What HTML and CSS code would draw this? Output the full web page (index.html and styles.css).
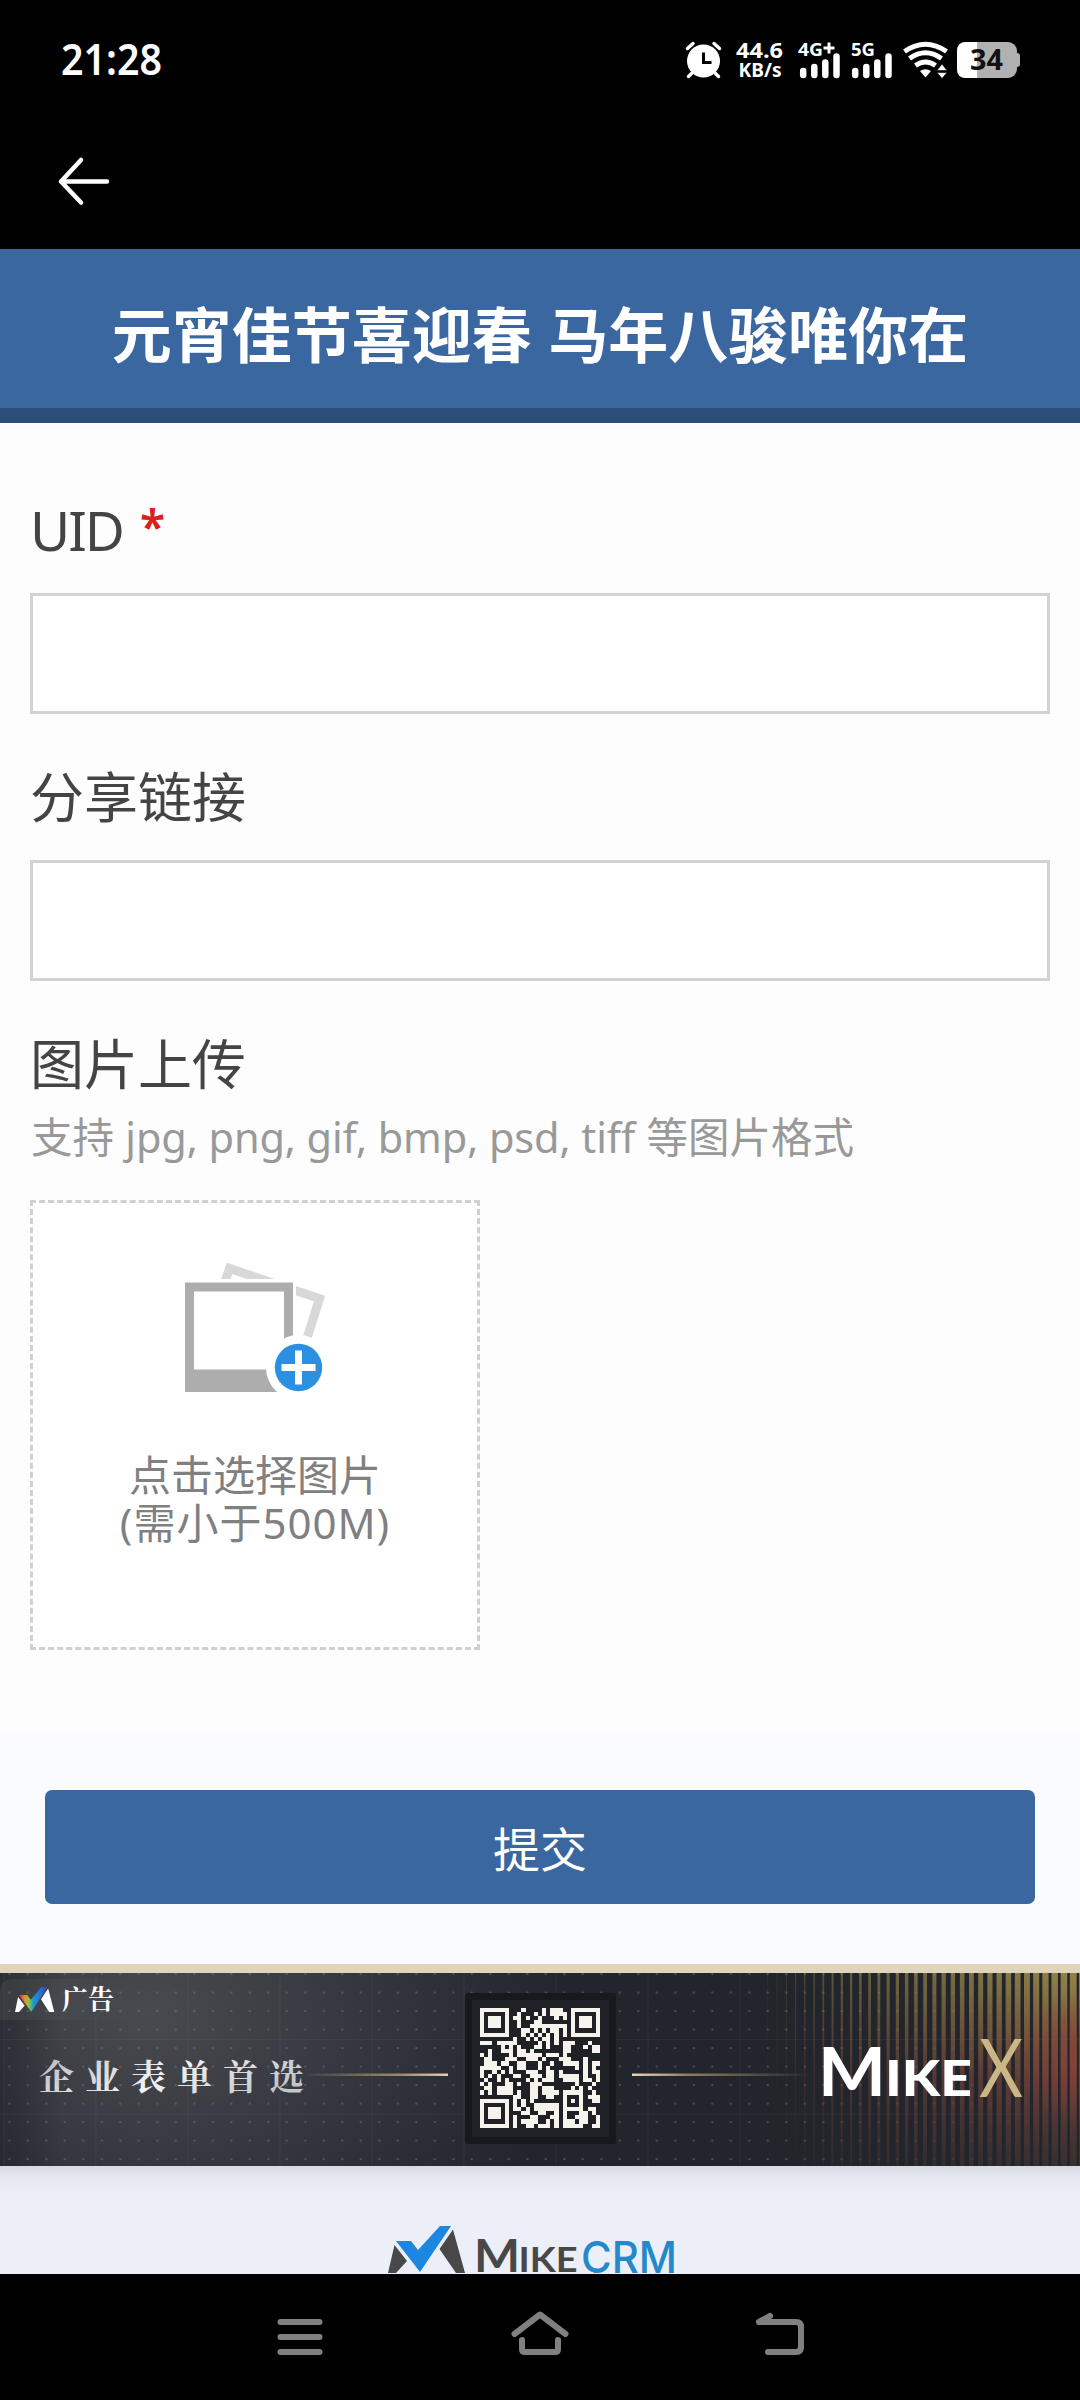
FILE: index.html
```html
<!DOCTYPE html>
<html lang="zh-CN">
<head>
<meta charset="utf-8">
<title>元宵佳节喜迎春 马年八骏唯你在</title>
<link rel="stylesheet" href="styles.css">
</head>
<body>
<div class="statusbar">
  <svg class="clock" width="110" height="50" viewBox="0 0 110 50"><text x="0" y="40" textLength="101" lengthAdjust="spacingAndGlyphs">21:28</text></svg>
  <div class="indicators">
    <svg width="38" height="40" viewBox="0 0 38 40">
      <circle cx="18.500" cy="21" r="16.500" fill="#fff"/>
      <path d="M2.500 8.500l5.500-5M34.500 8.500l-5.500-5M6.500 33.500l-3 3M30.500 33.500l3 3" stroke="#fff" stroke-width="3.500" stroke-linecap="round"/>
      <path d="M18.500 12.500v10h8" fill="none" stroke="#000" stroke-width="3"/>
    </svg>
    <svg class="stat" width="50" height="40" viewBox="0 0 50 40">
      <text x="0" y="17.500" font-size="21" textLength="47" lengthAdjust="spacingAndGlyphs">44.6</text>
      <text x="2.500" y="37" font-size="19" textLength="43" lengthAdjust="spacingAndGlyphs">KB/s</text>
    </svg>
    <svg class="stat" width="44" height="40" viewBox="0 0 44 40">
      <text x="0" y="15.500" font-size="18.500" textLength="25" lengthAdjust="spacingAndGlyphs">4G</text>
      <path d="M31 2.500v11M25.500 8h11" stroke="#fff" stroke-width="3"/>
      <path d="M5.200 31v4M16.300 27v8M27.300 22.500v12.500M38.500 16.500v18.500" stroke="#fff" stroke-width="6.500" stroke-linecap="round"/>
    </svg>
    <svg class="stat" width="44" height="40" viewBox="0 0 44 40">
      <text x="3" y="15.500" font-size="18.500" textLength="24" lengthAdjust="spacingAndGlyphs">5G</text>
      <path d="M8.200 31v4M19.300 27v8M30.300 22.500v12.500M41.500 16.500v18.500" stroke="#fff" stroke-width="6.500" stroke-linecap="round" transform="translate(-1)"/>
    </svg>
    <svg width="46" height="40" viewBox="0 0 46 40">
      <path d="M1.500 11.500q21-14.500 42 0M6.500 18.500q16-11.500 32 0M12.500 25.500q10-7 20 0" fill="none" stroke="#fff" stroke-width="5"/>
      <path d="M17 31q5.500-3.500 11 0l-5.500 6.500z" fill="#fff"/>
      <path d="M39 24l5 6.500h-10zM39 38.500l5-6h-10z" fill="#fff" stroke="#000" stroke-width=".6"/>
    </svg>
    <svg class="battery" width="64" height="40" viewBox="0 0 64 40">
      <rect x="0" y="2" width="60" height="36" rx="9" fill="#b1b1b1"/>
      <path d="M60 13q3 0 3 3v8q0 3-3 3z" fill="#b1b1b1"/>
      <path d="M9 2h11v36H9q-9 0-9-9V11q0-9 9-9z" fill="#fff"/>
      <text x="13" y="30" textLength="33" lengthAdjust="spacingAndGlyphs">34</text>
    </svg>
  </div>
</div>
<div class="appbar">
  <svg width="54" height="52" viewBox="0 0 54 52" fill="none" stroke="#fff" stroke-width="4.500" stroke-linecap="round" stroke-linejoin="round"><path d="M50 25.500H4M24 4L4 25.500l20 21"/></svg>
</div>
<header class="title">元宵佳节喜迎春 马年八骏唯你在</header>
<main class="form">
  <div class="field">
    <label class="label" for="uid"><span class="latin">UID</span><span class="req">*</span></label>
    <input class="input" id="uid">
  </div>
  <div class="field">
    <label class="label" for="link">分享链接</label>
    <input class="input" id="link">
  </div>
  <div class="field">
    <div class="label">图片上传</div>
    <div class="hint">支持 <span class="formats">jpg, png, gif, bmp, psd, tiff</span> 等图片格式</div>
    <div class="upload">
      <svg width="142" height="134" viewBox="0 0 142 134">
        <path d="M39.500 21L44.500 6.500 134.500 36.500 120.500 81" fill="none" stroke="#d8d8d8" stroke-width="9"/>
        <rect x="-3" y="17" width="114" height="116" fill="#fff"/>
        <path fill-rule="evenodd" fill="#adadad" d="M0 20.500h108v109.500H0zM9 29.500v78h90v-78z"/>
        <circle cx="113.500" cy="105.500" r="32.500" fill="#fff"/>
        <circle cx="113.500" cy="105.500" r="23.700" fill="#2b8fe2"/>
        <path d="M96.500 105.500h34M113.500 88.500v34" stroke="#fff" stroke-width="7"/>
      </svg>
      <div class="upload-text">点击选择图片<br><span class="limit">(需小于500M)</span></div>
    </div>
  </div>
</main>
<div class="submit"><button class="btn">提交</button></div>
<section class="ad">
  <svg width="1080" height="193" viewBox="0 0 1080 193">
    <defs>
      <radialGradient id="glow" gradientUnits="userSpaceOnUse" cx="150" cy="40" r="420" gradientTransform="translate(0 10) scale(1 .75)"><stop offset="0" stop-color="#484a4f"/><stop offset=".5" stop-color="#34373e"/><stop offset="1" stop-color="#22252b"/></radialGradient>
      <linearGradient id="edge"><stop offset="0" stop-color="#1c1f25" stop-opacity=".5"/><stop offset="1" stop-color="#1c1f25" stop-opacity="0"/></linearGradient>
      <pattern id="dots" width="18.500" height="18.500" patternUnits="userSpaceOnUse"><circle cx="9.300" cy="1.200" r="1.100" fill="#777b80" opacity=".55"/></pattern>
      <pattern id="grid" width="92" height="74.500" patternUnits="userSpaceOnUse" y="66"><path d="M0 .5h92M4 0v75" stroke="#808a96" stroke-opacity=".1"/></pattern>
      <linearGradient id="olive" x2="0" y2="1"><stop offset="0" stop-color="#938648"/><stop offset=".3" stop-color="#80603e"/><stop offset=".55" stop-color="#694039"/><stop offset="1" stop-color="#39302f"/></linearGradient>
      <radialGradient id="red" gradientUnits="userSpaceOnUse" cx="1080" cy="85" r="65"><stop offset="0" stop-color="#8a4238"/><stop offset="1" stop-color="#8a4238" stop-opacity="0"/></radialGradient>
      <linearGradient id="fade" gradientUnits="userSpaceOnUse" x1="740" x2="1080" y1="40" y2="0"><stop offset="0" stop-color="#000"/><stop offset=".3" stop-color="#888"/><stop offset="1" stop-color="#fff"/></linearGradient>
      <mask id="right"><rect x="740" width="340" height="193" fill="url(#fade)"/></mask>
      <clipPath id="stripes"><path id="stripe-path"/></clipPath>
      <linearGradient id="lineL"><stop offset="0" stop-color="#b09a75" stop-opacity="0"/><stop offset=".7" stop-color="#a18d6b"/><stop offset="1" stop-color="#e3ceb0"/></linearGradient>
      <linearGradient id="lineR"><stop offset="0" stop-color="#e8d4b5"/><stop offset=".3" stop-color="#8f7f62"/><stop offset="1" stop-color="#8f7f62" stop-opacity="0"/></linearGradient>
      <linearGradient id="rainbow"><stop offset="0" stop-color="#d22d35"/><stop offset=".2" stop-color="#f08a2b"/><stop offset=".34" stop-color="#8cc63e"/><stop offset=".5" stop-color="#1b9ad6"/><stop offset=".75" stop-color="#2673ce"/><stop offset="1" stop-color="#5a2ca8"/></linearGradient>
      <linearGradient id="silver" x2="1" y2=".3"><stop offset="0" stop-color="#b5b7bb"/><stop offset=".55" stop-color="#f2f2f4"/><stop offset="1" stop-color="#c4c6cb"/></linearGradient>
      <linearGradient id="badge"><stop offset="0" stop-color="#fff" stop-opacity=".06"/><stop offset="1" stop-color="#fff" stop-opacity="0"/></linearGradient>
    </defs>
    <rect width="1080" height="193" fill="url(#glow)"/>
    <rect width="60" height="193" fill="url(#edge)"/>
    <rect width="1080" height="193" fill="url(#grid)"/>
    <rect width="1080" height="193" fill="url(#dots)"/>
    <g mask="url(#right)"><g clip-path="url(#stripes)"><rect x="740" width="340" height="193" fill="url(#olive)"/><rect x="980" width="100" height="193" fill="url(#red)"/></g></g>
    <path d="M0 47V20q0-14 14-14h120v41z" fill="url(#badge)"/>
    <g transform="translate(15 14) scale(.51 .53)">
      <path d="M6 19l13 16L8 47H0zM65 3l12 44h-10L51 23z" fill="#fff"/>
      <path d="M8 15h16l7 9L52 0h12L32 47z" fill="url(#rainbow)"/>
    </g>
    <text class="serif" x="62" y="36" font-size="26" font-weight="700" fill="#fff">广告</text>
    <text class="serif" x="39" y="117" font-size="35" font-weight="700" letter-spacing="11" fill="url(#silver)">企业表单首选</text>
    <rect x="300" y="100.500" width="148" height="2.500" fill="url(#lineL)"/>
    <rect x="632" y="100.500" width="180" height="2.500" fill="url(#lineR)"/>
    <rect x="465" y="20" width="151" height="151" rx="3" fill="#18191f"/>
    <rect x="472" y="27" width="137" height="137" rx="2" fill="#202126"/>
    <path id="qr" transform="translate(480 34.700) scale(4.138)" fill="#f5f3eb" shape-rendering="crispEdges"/>
    <g class="brand">
      <text x="818" y="123" font-size="66" font-weight="700" fill="#fff" textLength="68" lengthAdjust="spacingAndGlyphs">M</text>
      <text x="885" y="123" font-size="50" font-weight="900" fill="#fff" textLength="87" lengthAdjust="spacingAndGlyphs">IKE</text>
      <text x="979" y="124" font-size="82" fill="#cbb685" textLength="44" lengthAdjust="spacingAndGlyphs">X</text>
    </g>
  </svg>
</section>
<footer class="footer">
  <svg width="292" height="48" viewBox="0 0 292 48">
    <path d="M6.500 19L19 35 8 47H0zM65 3.500L77 47h-9L51.500 23z" fill="#484848"/>
    <path d="M8 15h15l7 9L52 0h11L32 46z" fill="#1c86e0"/>
    <g class="brand">
      <text x="86" y="46" font-size="45" font-weight="700" fill="#484848" textLength="46" lengthAdjust="spacingAndGlyphs">M</text>
      <text x="130.500" y="46" font-size="34" font-weight="700" fill="#484848" textLength="59" lengthAdjust="spacingAndGlyphs">IKE</text>
      <text class="crm" x="193" y="46.500" font-size="44" fill="#2488cc" textLength="96" lengthAdjust="spacingAndGlyphs">CRM</text>
    </g>
  </svg>
</footer>
<nav class="navbar">
  <svg width="60" height="50" viewBox="0 0 60 50"><path d="M10.500 10h39M10.500 25h39M10.500 40h39"/></svg>
  <svg width="60" height="50" viewBox="0 0 60 50"><path d="M4.500 22L30 2.500 55.500 22M12 28v9q0 3 3 3h30q3 0 3-3v-9"/></svg>
  <svg width="60" height="50" viewBox="0 0 60 50"><path d="M20 4L9 10h37q5 0 5 5v20q0 5-5 5H18"/></svg>
</nav>
<script src="art.js"></script>
</body>
</html>
```
FILE: styles.css
```css
* { box-sizing: border-box; }
body {
  margin: 0;
  width: 1080px;
  height: 2400px;
  display: flex;
  flex-direction: column;
  background: #fdfdfd;
  color: #444;
  font-family: "Noto Sans", "Noto Sans CJK SC", sans-serif;
  overflow: hidden;
}
svg { display: block; flex: none; overflow: visible; }
.statusbar {
  height: 120px;
  background: #000;
  display: flex;
  justify-content: space-between;
  align-items: flex-start;
  padding: 35px 59px 0 61px;
}
.clock text { font: 600 43px "Noto Sans", sans-serif; fill: #fff; }
.indicators { display: flex; padding-top: 5px; }
.indicators svg:nth-child(2) { margin-left: 13px; }
.indicators svg:nth-child(3) { margin-left: 12px; }
.indicators svg:nth-child(4) { margin-left: 6px; }
.indicators svg:nth-child(5) { margin-left: 11px; }
.indicators svg:nth-child(6) { margin-left: 8px; }
.stat text { font-family: "Noto Sans", sans-serif; font-weight: 700; fill: #fff; }
.battery text { font: 700 28px "Noto Sans", sans-serif; fill: #111; }
.appbar { height: 129px; background: #000; padding: 36px 0 0 57px; }
.title {
  height: 174px;
  background: #3a67a0;
  border-bottom: 15px solid #2b4e7b;
  color: #fff;
  font: 700 60px/166px "Noto Sans CJK SC", sans-serif;
  word-spacing: 3px;
  text-align: center;
  white-space: nowrap;
}
.form { height: 1309px; padding: 66px 30px 0; }
.field { height: 267px; }
.label {
  display: block;
  height: 104px;
  font: 400 54px/78px "Noto Sans CJK SC", sans-serif;
  white-space: nowrap;
}
.latin { font-family: "Noto Sans", sans-serif; font-size: 55px; letter-spacing: -2px; }
.req {
  color: #d9201f;
  font: 600 46px/60px "Noto Sans", sans-serif;
  margin-left: 17px;
  vertical-align: 7px;
}
.input {
  display: block;
  width: 1020px;
  height: 121px;
  border: 3px solid #d2d2d2;
  border-radius: 0;
  background: #fff;
  padding: 0 20px;
  font-size: 42px;
}
.field:nth-child(3) .label { height: 82px; }
.hint {
  height: 95px;
  padding-left: 1px;
  color: #999;
  font: 400 41.500px/60px "Noto Sans CJK SC", sans-serif;
  white-space: nowrap;
}
.formats { font-family: "Noto Sans", sans-serif; letter-spacing: -0.100px; margin: 0 2px; }
.upload {
  width: 450px;
  height: 450px;
  border: 3px dashed #d0d0d0;
  background: #fff;
  display: flex;
  flex-direction: column;
  align-items: center;
  padding-top: 59px;
}
.upload svg { margin-left: 2px; }
.upload-text {
  margin-top: 52px;
  color: #808080;
  font: 400 42px/49px "Noto Sans CJK SC", sans-serif;
  text-align: center;
}
.limit {
  display: block;
  font-family: "Noto Sans", "Noto Sans CJK SC", sans-serif;
  line-height: 51px;
  letter-spacing: 1px;
}
.submit { height: 232px; background: #fafbfe; padding: 58px 45px 0; }
.btn {
  display: block;
  width: 990px;
  height: 114px;
  border: 0;
  border-radius: 7px;
  background: #3a67a0;
  color: #fff;
  font: 400 47px/114px "Noto Sans CJK SC", sans-serif;
  padding: 0;
}
.ad { height: 202px; border-top: 9px solid #e0d4ba; }
.serif { font-family: "Noto Serif CJK SC", "Noto Sans CJK SC", serif; }
.brand { font-family: Lato, sans-serif; }
.crm { font-family: Inter, sans-serif; font-weight: 500; }
.footer {
  height: 108px;
  background: linear-gradient(#d8dae3, #e6e8f1 12px, #edeff8 28px);
  padding: 60px 0 0 388px;
}
.navbar {
  height: 126px;
  background: #000;
  display: flex;
  justify-content: center;
  gap: 180px;
  padding-top: 38px;
}
.navbar path { fill: none; stroke: #808080; stroke-width: 6; stroke-linecap: round; stroke-linejoin: round; }
```
FILE: art.js
```js
// QR modules: filled columns of each row, without the three finder squares
const rows = [
  "10 15 17-19", "9 13 15 17-20", "8 9 11 14 18 20", "9 13 14",
  "9 12-20", "10-11 13 15 17-18 20", "10 12 14 16 18 20", "8 11 13 15 16 18",
  "0-2 4-8 14 16 18 20-22 26", "5 7 9 13 14 16 20 21 25 27 28",
  "2 5-7 9 10 12 20 21 27 28", "0 2 7 9-14 16-18 20",
  "1 2 6-8 11-13 15 19-21 25", "1-3 5 6 9 10 14 17 20-23 25 27 28",
  "0-4 7 9 10 14 16 23 25 27", "0 3 5 7 11-13 16 17 19 25 27 28",
  "0 2 4 8 9 12-14 16 17 19-23 25 28", "1 4 6 11 13 15-17 20-23 25 26 28",
  "0 2 6 7 9 12-14 23 27", "1 2 4-7 12 13 15-17 22 24 26",
  "0 2 4-7 9 12 13 15-18 20-24 27", "8 9 12 13 16 17 20 24 26-28",
  "8 10 12 20 22 24 27 28", "8 10 13-18 20 24",
  "8 9 11 13-18 20-24 26 27", "10 11 14 15 18 20 24 25 27",
  "8 12 13 17 18 20 23-25 28", "8 10-13 16 18 20-22 24 25 28",
  "8 11 12 14-16 18 20-24 27 28"
];
let qr = "";
rows.forEach((row, y) => row.split(" ").forEach(run => {
  const [a, b = a] = run.split("-").map(Number);
  qr += `M${a} ${y}h${b - a + 1}v1h${a - b - 1}z`;
}));
[[0, 0], [22, 0], [0, 22]].forEach(([x, y]) => {
  qr += `M${x} ${y}h7v7h-7zM${x + 1} ${y + 1}v5h5v-5zM${x + 2} ${y + 2}h3v3h-3z`;
});
document.getElementById("qr").setAttribute("d", qr);

// Vertical stripes that widen toward the right edge
let d = "";
for (let i = 0; i < 35; i++) {
  const x = 767.5 + i * 9.16;
  const w = Math.max(0.6, 0.6 + i * 0.19);
  d += `M${x} 0h${w}v193h${-w}z`;
}
document.getElementById("stripe-path").setAttribute("d", d);
```
